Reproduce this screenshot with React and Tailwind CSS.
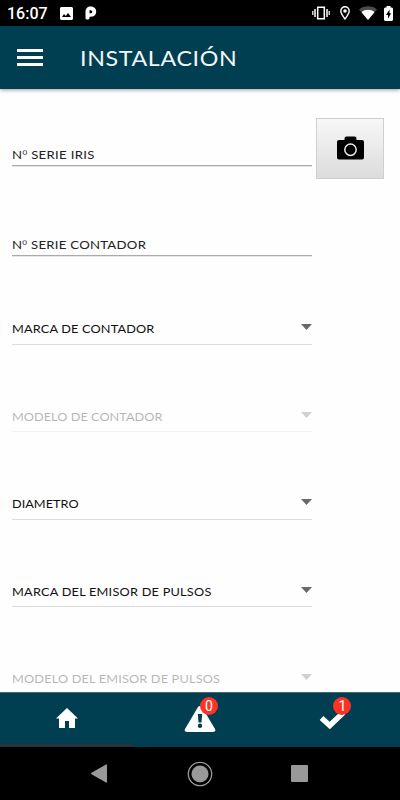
import React from "react";

function Label({ children, className = "" }) {
  return (
    <span className={`block origin-left whitespace-nowrap font-['Lato',sans-serif] leading-4 ${className}`}>
      {children}
    </span>
  );
}

function TextField({ label, tracking }) {
  return (
    <div className="flex h-[20px] w-[300px] flex-col justify-between">
      <Label className={`scale-x-[1.08] text-[12.2px] text-[#222] ${tracking}`}>
        N<span className="font-['Liberation_Sans',sans-serif] text-[12px] leading-none text-[#555]">º</span> {label}
      </Label>
      <div className="h-[2px] shrink-0 border-t border-[#aaa] bg-[#e6e6e6]" />
    </div>
  );
}

function SelectField({ label, tracking, disabled }) {
  return (
    <div className={`h-[87.5px] w-[300px] ${disabled ? "opacity-30" : ""}`}>
      <div className="flex h-[23.5px] items-start justify-between border-b border-[#dcdcdc]">
        <Label className={`scale-x-[1.06] text-[12px] text-[#111] ${tracking}`}>{label}</Label>
        <svg className="mt-[3px] h-[6px] w-[11px]" viewBox="0 0 11 6">
          <path d="M0 0h11L5.5 6z" fill="#686868" />
        </svg>
      </div>
    </div>
  );
}

function Badge({ children }) {
  return (
    <span className="absolute -top-[9px] left-[16px] flex size-[18px] items-center justify-center rounded-full bg-[#ff3324] font-['Roboto',sans-serif] text-[14px] leading-none text-white">
      {children}
    </span>
  );
}

function StatusBar() {
  return (
    <div className="flex h-[26px] items-center bg-black px-[7px] text-white">
      <span className="mt-[2px] w-[40px] whitespace-nowrap font-['Roboto',sans-serif] text-[16px] font-medium leading-none">16:07</span>
      <svg className="ml-[13px] h-[13px] w-[13px]" viewBox="0 0 13 13">
        <path fill="#fff" fillRule="evenodd" d="M1 0h11l1 1v11l-1 1H1l-1-1V1zM2 10h9L8 6l-2.2 3L4 7z" />
      </svg>
      <svg className="ml-3 h-[14px] w-[12px]" viewBox="0 0 12 14">
        <path fill="#fff" fillRule="evenodd" d="M.5 6C.5 2.5 2.500 .5 5.500 .5s5.700 1.500 5.700 5-2.500 5.200-5.200 5.200H4.500V12c0 2-4 2-4 0zM4.500 4.200v3h1.300a1.500 1.500 0 0 0 0-3z" />
      </svg>
      <svg className="ml-auto h-[14px] w-[18px]" viewBox="0 0 18 14" fill="none" stroke="#fff">
        <path d="M5.700 1.200h6.600v11.600H5.700z" strokeWidth="1.500" />
        <path d="M3 3v8M15 3v8" strokeWidth="1.500" />
        <path d="M.8 5v4M17.200 5v4" strokeWidth="1.200" />
      </svg>
      <svg className="ml-[10px] h-[14px] w-[10px]" viewBox="0 0 10 14">
        <path fill="none" stroke="#fff" strokeWidth="1.400" d="M5 13C3.400 10.800.8 7.500.8 5a4.200 4.200 0 0 1 8.400 0C9.200 7.500 6.600 10.800 5 13z" />
        <circle cx="5" cy="5" r="1.800" fill="#fff" />
      </svg>
      <svg className="ml-[9px] h-[14px] w-[18px]" viewBox="0 0 18 14">
        <path fill="#4a4a4a" d="M0 3.500C5 -.7 13 -.7 18 3.500L9 14z" />
        <path fill="#fff" d="M2.500 6.200C6 3 12 3 15.500 6.200L9 14z" />
      </svg>
      <svg className="ml-[7px] h-[15px] w-[9px]" viewBox="0 0 9 15">
        <path fill="#fff" d="M2.500 0h4v1.500H8l1 1V14l-1 1H1l-1-1V2.500l1-1h1.500z" />
        <path fill="#000" d="M5.500 3.500 2 9h2v3.800L7.200 7.300h-1.700z" />
      </svg>
    </div>
  );
}

export default function App() {
  return (
    <div className="flex h-[800px] w-[400px] flex-col overflow-hidden bg-[#fefefe]">
      <StatusBar />
      <header className="z-10 flex h-[63px] shrink-0 items-center bg-[#003f51] pl-[17px] shadow-[0_1px_4px_rgba(0,0,0,0.4)]">
        <div className="flex w-[26px] flex-col gap-[4px]">
          <div className="h-[3px] bg-white" />
          <div className="h-[3px] bg-white" />
          <div className="h-[3px] bg-white" />
        </div>
        <h1 className="ml-[36.500px] origin-left scale-x-[1.08] whitespace-nowrap font-['Lato',sans-serif] text-[21.5px] leading-6 tracking-[0.600px] text-[#f4f7f8]">INSTALACIÓN</h1>
      </header>

      <main className="min-h-0 flex-1 overflow-hidden pl-3">
        <div className="flex gap-1 pt-[29px]">
          <div className="pt-[29px]">
            <TextField label="SERIE IRIS" tracking="tracking-[0.300px]" />
          </div>
          <button className="flex h-[61px] w-[68px] items-center justify-center border border-[#cfcfcf] bg-linear-to-b from-[#f7f7f7] to-[#dcdcdc]">
            <svg className="mb-[2px] h-[24px] w-[27px]" viewBox="0 0 27 24">
              <path d="M2 4h5.500V2.500q0-2 2-2h8q2 0 2 2V4H25q2 0 2 2v15.500q0 2-2 2H2q-2 0-2-2V6q0-2 2-2z" />
              <circle cx="13.500" cy="13.700" r="5.700" fill="none" stroke="#eeeeee" strokeWidth="1.500" />
            </svg>
          </button>
        </div>
        <div className="pt-[58px]">
          <TextField label="SERIE CONTADOR" tracking="tracking-[0.250px]" />
        </div>
        <div className="pt-[64px]">
          <SelectField label="MARCA DE CONTADOR" tracking="tracking-[0.150px]" />
          <SelectField label="MODELO DE CONTADOR" tracking="tracking-[0.020px]" disabled />
          <SelectField label="DIAMETRO" tracking="tracking-normal" />
          <SelectField label="MARCA DEL EMISOR DE PULSOS" tracking="tracking-[0.220px]" />
          <SelectField label="MODELO DEL EMISOR DE PULSOS" tracking="tracking-[0.150px]" disabled />
        </div>
      </main>

      <nav className="grid h-[55px] shrink-0 grid-cols-3 border-t border-[#52636b] bg-[#003f51]">
        <div className="flex flex-col items-center justify-between pt-[15px]">
          <svg className="h-[20px] w-[22px]" viewBox="0 0 22 20">
            <path fill="#fff" d="M11 0 22 10.500h-3V20h-6v-7H9v7H3v-9.500H0z" />
          </svg>
          <div className="h-[3px] w-full bg-[#29333d]" />
        </div>
        <div className="flex justify-center pt-[13px]">
          <div className="relative h-[26px] w-[32px]">
            <svg className="h-[26px] w-[32px]" viewBox="0 0 32 26">
              <path fill="#fff" d="M14 1q2-2 4 0l13 22q1 3-2 3H3q-3 0-2-3z" />
              <path fill="#003f51" d="M13.800 8h4.400l-.7 8.500h-3zM16 17.500a2.200 2.200 0 1 1 0 4.400 2.200 2.200 0 0 1 0-4.400z" />
            </svg>
            <Badge>0</Badge>
          </div>
        </div>
        <div className="flex justify-center pt-[13px]">
          <div className="relative h-[26px] w-[32px]">
            <svg className="h-[24px] w-[28px]" viewBox="0 0 28 24">
              <path fill="none" stroke="#fff" strokeWidth="5.500" d="M4.500 12 12.800 19.500 27 6" />
            </svg>
            <Badge>1</Badge>
          </div>
        </div>
      </nav>
      <div className="flex h-[53px] shrink-0 items-center bg-black pl-[91px]">
        <svg className="h-[19px] w-[16px]" viewBox="0 0 16 19">
          <path fill="#999" d="M15 .5q1-.5 1 .7v16.600q0 1.200-1 .7L.5 10.200q-.8-.7 0-1.400z" />
        </svg>
        <svg className="ml-[80px] size-[26px]" viewBox="0 0 26 26">
          <circle cx="13" cy="13" r="11.700" fill="none" stroke="#999" strokeWidth="1.300" />
          <circle cx="13" cy="13" r="8.500" fill="#999" />
        </svg>
        <div className="ml-[78px] size-[17px] rounded-[1px] bg-[#999]" />
      </div>
    </div>
  );
}
